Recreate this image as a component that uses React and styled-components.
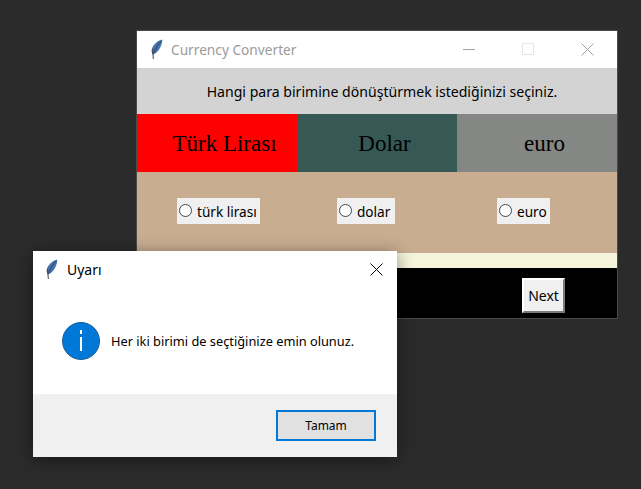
import React from "react";
import styled, { createGlobalStyle } from "styled-components";

const Global = createGlobalStyle`
  html, body { margin: 0; padding: 0; }
  body { background: #2b2b2b; width: 641px; height: 489px; overflow: hidden; font-family: "Noto Sans", "Open Sans", sans-serif; }
`;

const Desktop = styled.div`
  position: relative;
  width: 641px;
  height: 489px;
  background: #2b2b2b;
  overflow: hidden;
`;

const MainWindow = styled.div`
  position: absolute;
  left: 137px;
  top: 31px;
  width: 480px;
  display: flex;
  flex-direction: column;
  box-shadow: 0 0 0 1px #4a4a4a;
`;

const DialogWindow = styled.div`
  position: absolute;
  left: 33px;
  top: 251px;
  width: 364px;
  height: 206px;
  display: flex;
  flex-direction: column;
  background: #fff;
  box-shadow: 0 3px 16px rgba(0, 0, 0, 0.45);
`;

const TitleBar = styled.div`
  height: 37px;
  background: #fff;
  display: flex;
  align-items: center;
  padding-left: 13px;
  flex-shrink: 0;
`;

const DialogTitleBar = styled(TitleBar)`
  padding-left: 12px;
`;

const Feather = styled.svg`
  width: 14px;
  height: 21px;
  flex-shrink: 0;
`;

const TitleText = styled.span`
  margin-left: ${(p) => p.$gap}px;
  font-size: ${(p) => p.$size}px;
  color: ${(p) => p.$color};
  white-space: nowrap;
`;

const WindowControls = styled.div`
  margin-left: auto;
  display: flex;
  align-items: center;
  color: ${(p) => p.$color};
`;

const ControlButton = styled.div`
  width: ${(p) => p.$width}px;
  height: 37px;
  display: flex;
  align-items: center;
  justify-content: center;
`;

const Instruction = styled.div`
  height: 46px;
  background: #d3d3d3;
  display: flex;
  align-items: center;
  justify-content: center;
  padding-left: 10px;
  box-sizing: border-box;
  font-size: 14.08px;
  color: #000;
  white-space: nowrap;
`;

const Columns = styled.div`
  display: grid;
  grid-template-columns: repeat(3, 160px);
`;

const Currency = styled.div`
  height: 58px;
  background: ${(p) => p.$bg};
  display: flex;
  align-items: center;
  justify-content: center;
  padding: 2px 0 0 15px;
  box-sizing: border-box;
  font-family: "Liberation Serif", serif;
  font-size: 23px;
  color: #000;
  white-space: nowrap;
`;

const RadioRow = styled(Columns)`
  height: 81px;
  background: #c8ad91;
  align-items: start;
  padding-top: 26px;
  box-sizing: border-box;
`;

const RadioCell = styled.div`
  padding-left: 40px;
  display: flex;
`;

const RadioLabel = styled.label`
  display: flex;
  align-items: center;
  width: ${(p) => p.$width}px;
  height: 26px;
  background: #f0f0f0;
  padding-left: 2px;
  box-sizing: border-box;
  font-size: 13.6px;
  color: #000;
  white-space: nowrap;
`;

const RadioDot = styled.span`
  width: 13px;
  height: 13px;
  border: 1.5px solid #444;
  border-radius: 50%;
  background: #fff;
  box-sizing: border-box;
  margin-right: 5px;
  margin-top: -2px;
  flex-shrink: 0;
`;

const BeigeStrip = styled.div`
  height: 15px;
  background: #f5f5dc;
`;

const BlackBar = styled.div`
  height: 50px;
  background: #000;
  display: flex;
  align-items: flex-start;
  padding: 10px 0 0 385px;
  box-sizing: border-box;
`;

const NextButton = styled.button`
  width: 43px;
  height: 35px;
  padding: 0;
  background: #f0f0f0;
  border: 2px solid;
  border-color: #fff #7a7a7a #7a7a7a #fff;
  font-family: inherit;
  font-size: 14px;
  color: #000;
`;

const DialogBody = styled.div`
  flex: 1;
  display: flex;
  align-items: center;
  padding-left: 29px;
`;

const InfoIcon = styled.svg`
  width: 38px;
  height: 38px;
  flex-shrink: 0;
`;

const Message = styled.div`
  margin-left: 11px;
  font-size: 12.8px;
  color: #000;
  white-space: nowrap;
`;

const DialogFooter = styled.div`
  height: 63px;
  background: #f0f0f0;
  display: flex;
  justify-content: flex-end;
  align-items: flex-start;
  padding: 16px 21px 0 0;
  box-sizing: border-box;
`;

const OkButton = styled.button`
  width: 100px;
  height: 31px;
  padding: 0;
  background: #e1e1e1;
  border: 2px solid #0078d7;
  font-family: inherit;
  font-size: 12px;
  color: #000;
`;

const FeatherIcon = () => (
  <Feather viewBox="0 0 14 21">
    <path d="M12.3 0.5 C8.5 1.3 4.2 4.5 2.4 8.5 C1.4 10.8 1.4 13.3 2.6 15.4 C6 14.8 9 11.5 10.6 7.8 C11.6 5.4 12.3 3 12.3 0.5 Z" fill="#4672ad" />
    <path d="M11 2.2 C8 5.5 5 10 3 15.6" stroke="#2b3c55" strokeWidth="0.9" fill="none" />
    <path d="M2.2 9 C1.6 11.5 1.8 13.8 2.8 15.4 C3.8 13.5 3.6 11 2.2 9 Z" fill="#46505e" />
    <path d="M3 15.2 L3.4 20" stroke="#5a5a5a" strokeWidth="1.1" fill="none" />
  </Feather>
);

const CloseGlyph = () => (
  <svg width="13" height="13" viewBox="0 0 13 13">
    <path d="M0.5 0.5 L12.5 12.5 M12.5 0.5 L0.5 12.5" stroke="currentColor" strokeWidth="1" fill="none" />
  </svg>
);

export default function App() {
  return (
    <Desktop>
      <Global />
      <MainWindow>
        <TitleBar>
          <FeatherIcon />
          <TitleText $gap={7} $size={13.7} $color="#9b9b9b">Currency Converter</TitleText>
          <WindowControls $color="#a0a0a0">
            <ControlButton $width={59}>
              <svg width="13" height="13" viewBox="0 0 13 13">
                <path d="M0 6.5 H12" stroke="currentColor" fill="none" />
              </svg>
            </ControlButton>
            <ControlButton $width={59}>
              <svg width="13" height="13" viewBox="0 0 13 13">
                <rect x="0.5" y="0.5" width="11" height="11" stroke="#e6e6e6" fill="none" />
              </svg>
            </ControlButton>
            <ControlButton $width={59}>
              <CloseGlyph />
            </ControlButton>
          </WindowControls>
        </TitleBar>
        <Instruction>Hangi para birimine dönüştürmek istediğinizi seçiniz.</Instruction>
        <Columns>
          <Currency $bg="#ff0000">Türk Lirası</Currency>
          <Currency $bg="#365956">Dolar</Currency>
          <Currency $bg="#858785">euro</Currency>
        </Columns>
        <RadioRow>
          <RadioCell><RadioLabel $width={83}><RadioDot />türk lirası</RadioLabel></RadioCell>
          <RadioCell><RadioLabel $width={58}><RadioDot />dolar</RadioLabel></RadioCell>
          <RadioCell><RadioLabel $width={53}><RadioDot />euro</RadioLabel></RadioCell>
        </RadioRow>
        <BeigeStrip />
        <BlackBar>
          <NextButton>Next</NextButton>
        </BlackBar>
      </MainWindow>
      <DialogWindow>
        <DialogTitleBar>
          <FeatherIcon />
          <TitleText $gap={8} $size={14} $color="#000">Uyarı</TitleText>
          <WindowControls $color="#000">
            <ControlButton $width={42}>
              <CloseGlyph />
            </ControlButton>
          </WindowControls>
        </DialogTitleBar>
        <DialogBody>
          <InfoIcon viewBox="0 0 38 38">
            <circle cx="19" cy="19" r="18.5" fill="#0078d7" stroke="#1c5f99" strokeWidth="1" />
            <path d="M19 8 V12 M19 15 V29" stroke="#fff" strokeWidth="2" fill="none" />
          </InfoIcon>
          <Message>Her iki birimi de seçtiğinize emin olunuz.</Message>
        </DialogBody>
        <DialogFooter>
          <OkButton>Tamam</OkButton>
        </DialogFooter>
      </DialogWindow>
    </Desktop>
  );
}
